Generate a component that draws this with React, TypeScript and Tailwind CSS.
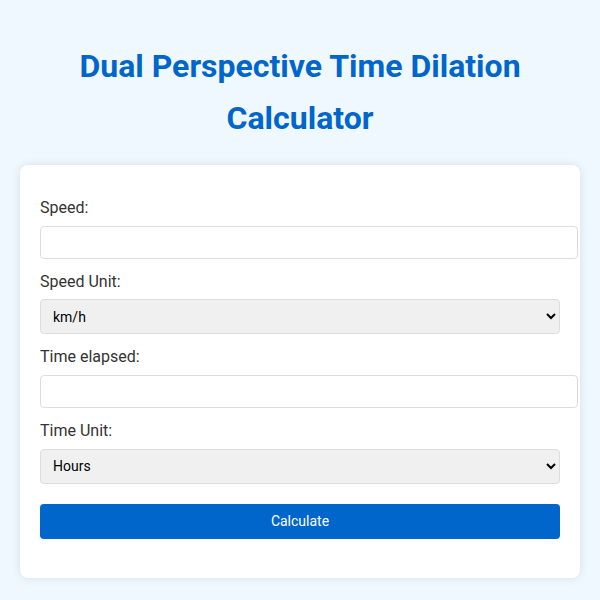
import * as React from "react";

/**
 * TimeDilationPage
 *
 * Simple calculator form: speed, speed unit, time elapsed, time unit.
 */
export default function App() {
  const [speed, setSpeed] = React.useState("");
  const [speedUnit, setSpeedUnit] = React.useState("kmh");
  const [time, setTime] = React.useState("");
  const [timeUnit, setTimeUnit] = React.useState("hours");

  return (
    <div className="min-h-[600px] bg-[#f0f8ff] p-5 font-['Roboto',sans-serif] text-[16px] leading-[1.6] text-[#333]">
      <h1 className="my-[21.4px] text-center text-[32px] font-bold text-[#0066cc]">
        Dual Perspective Time Dilation Calculator
      </h1>

      <div className="rounded-lg bg-white px-5 pt-5 pb-[39px] shadow-[0_0_10px_rgba(0,0,0,0.1)]">
        <div className="my-[10px]">
          <label className="mb-[5px] block">Speed:</label>
          <input
            type="number"
            value={speed}
            onChange={(e) => setSpeed(e.target.value)}
            className="block h-[33px] w-[538px] rounded border border-[#ddd] bg-white px-2 text-sm"
          />
        </div>

        <div className="my-[10px]">
          <label className="mb-[5px] block">Speed Unit:</label>
          <select
            value={speedUnit}
            onChange={(e) => setSpeedUnit(e.target.value)}
            className="block h-[35px] w-full rounded border border-[#ddd] bg-[#f0f0f0] px-2 text-sm text-black"
          >
            <option value="kmh">km/h</option>
            <option value="mph">mph</option>
            <option value="ms">m/s</option>
            <option value="c">% of c</option>
          </select>
        </div>

        <div className="my-[10px]">
          <label className="mb-[5px] block">Time elapsed:</label>
          <input
            type="number"
            value={time}
            onChange={(e) => setTime(e.target.value)}
            className="block h-[33px] w-[538px] rounded border border-[#ddd] bg-white px-2 text-sm"
          />
        </div>

        <div className="my-[10px]">
          <label className="mb-[5px] block">Time Unit:</label>
          <select
            value={timeUnit}
            onChange={(e) => setTimeUnit(e.target.value)}
            className="block h-[35px] w-full rounded border border-[#ddd] bg-[#f0f0f0] px-2 text-sm text-black"
          >
            <option value="hours">Hours</option>
            <option value="days">Days</option>
            <option value="years">Years</option>
          </select>
        </div>

        <button
          type="button"
          className="mt-5 block h-[35px] w-full rounded bg-[#0066cc] text-sm text-white"
        >
          Calculate
        </button>
      </div>
    </div>
  );
}
